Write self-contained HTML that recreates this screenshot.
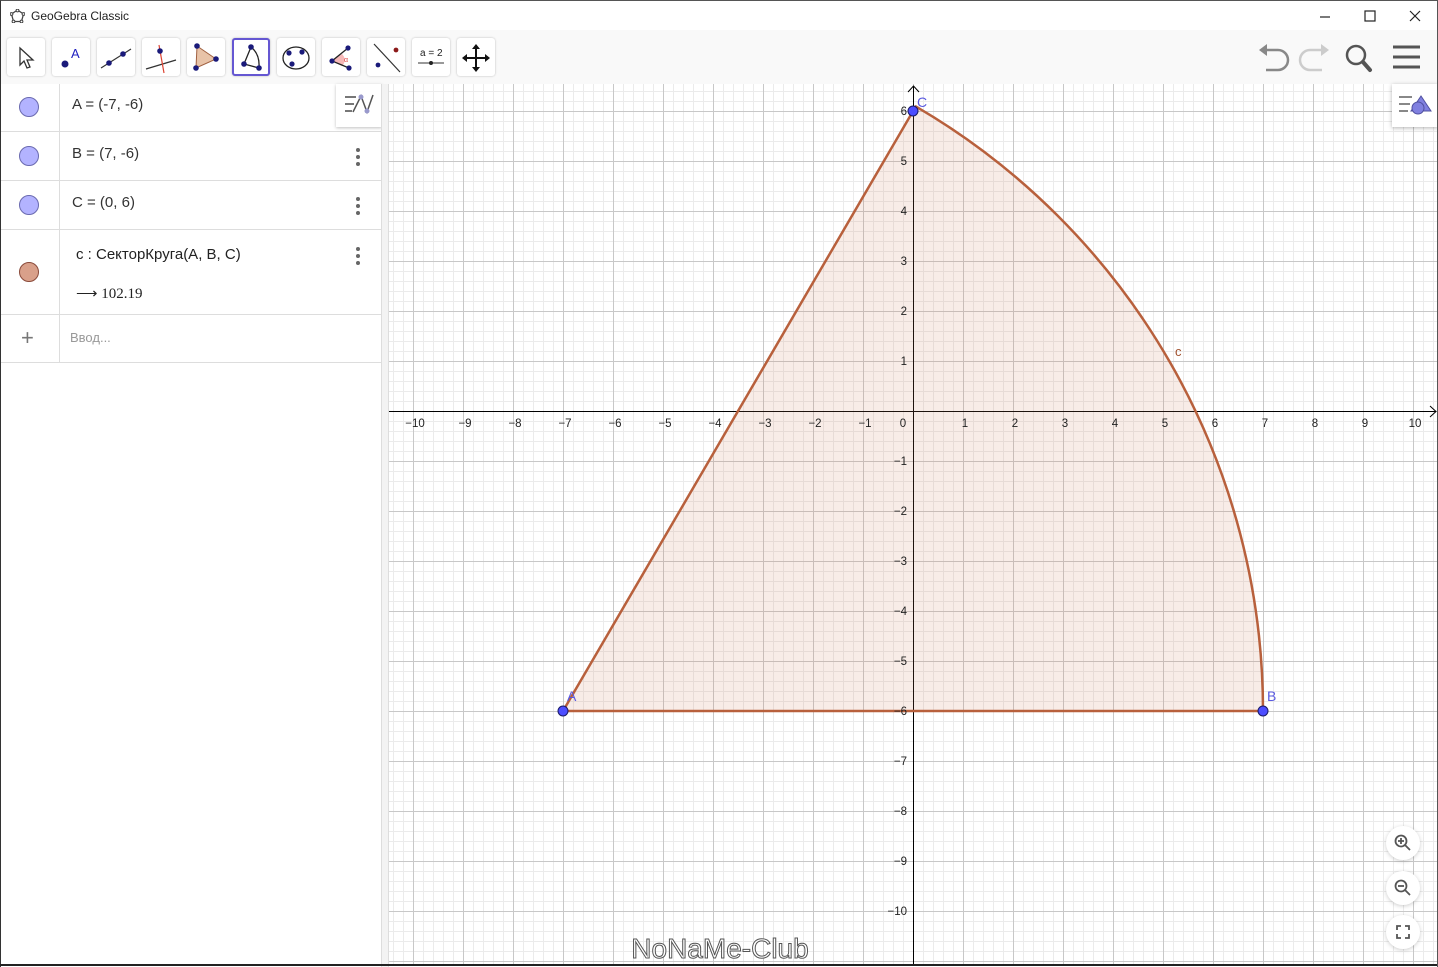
<!DOCTYPE html>
<html><head><meta charset="utf-8"><style>
*{margin:0;padding:0;box-sizing:border-box}
body{width:1438px;height:967px;overflow:hidden;background:#fff;font-family:"Liberation Sans","Noto Sans CJK SC",sans-serif;position:relative}
.title{position:absolute;left:0;top:0;width:1438px;height:30px;background:#fff;border-left:1px solid #333;border-top:1px solid #555}
.title span{position:absolute;left:30px;top:8px;font-size:12px;color:#222}
.tb{position:absolute;left:0;top:30px;width:1438px;height:54px;background:#f9f9f9;border-left:1px solid #333}
.btn{position:absolute;top:8px;width:38px;height:38px;background:#fff;border-radius:3px;box-shadow:0 0 2px rgba(0,0,0,.25)}
.btn.sel{border:2px solid #6557d2}
.alg{position:absolute;left:0;top:84px;width:381px;height:883px;background:#fff;border-left:1px solid #333}
.row{position:absolute;left:0;width:381px;border-bottom:1px solid #ddd}
.dot{position:absolute;left:18px;width:20px;height:20px;border-radius:50%;background:#b3b3ff;border:1px solid #6a6ab0}
.vl{position:absolute;left:58px;top:0;width:1px;height:279px;background:#ddd}
.txt{position:absolute;left:71px;font-size:15px;color:#333}
.menu{position:absolute;left:355px;width:4px;font-size:0}
.menu i{display:block;width:4px;height:4px;border-radius:50%;background:#666;margin-bottom:3px}
.sep{position:absolute;left:381px;top:84px;width:8px;height:883px;background:#f3f3f3;border-left:1px solid #ddd;border-right:1px solid #ddd}
</style></head><body>
<div class="title"><svg style="position:absolute;left:9px;top:8px" width="15" height="14"><polygon points="7.5,1 13.5,5 11.5,12.5 3.5,12.5 1.5,5" fill="none" stroke="#444" stroke-width="1.3"/><g fill="#fff" stroke="#444"><circle cx="7.5" cy="1.5" r="1.4"/><circle cx="13.5" cy="5" r="1.4"/><circle cx="11.5" cy="12.5" r="1.4"/><circle cx="3.5" cy="12.5" r="1.4"/><circle cx="1.5" cy="5" r="1.4"/></g></svg><span>GeoGebra Classic</span>
<svg style="position:absolute;left:1310px;top:6px" width="120" height="20" stroke="#222" stroke-width="1.2" fill="none"><line x1="9" y1="10" x2="19" y2="10"/><rect x="54" y="4" width="10" height="10"/><path d="M99 4 L109 14 M109 4 L99 14"/></svg></div>
<div class="tb">
<div class="btn" style="left:6px"><svg width="38" height="38"><path d="M13 10 L13 27 L17 23 L20 30 L23 29 L20 22 L26 22 Z" fill="#fff" stroke="#333" stroke-width="1.3"/></svg></div>
<div class="btn" style="left:51px"><svg width="38" height="38"><circle cx="13" cy="26" r="3.5" fill="#1a1a7a"/><text x="19" y="20" font-size="13" fill="#2020c0" font-family="Liberation Sans">A</text></svg></div>
<div class="btn" style="left:96px"><svg width="38" height="38"><line x1="4" y1="30" x2="34" y2="11" stroke="#333" stroke-width="1.2"/><circle cx="12" cy="25" r="2.8" fill="#1a1a7a"/><circle cx="26" cy="16" r="2.8" fill="#1a1a7a"/></svg></div>
<div class="btn" style="left:141px"><svg width="38" height="38"><line x1="4" y1="31" x2="34" y2="22" stroke="#333" stroke-width="1.2"/><line x1="17" y1="7" x2="22" y2="35" stroke="#d43" stroke-width="1.2"/><circle cx="18" cy="13" r="2.8" fill="#1a1a7a"/></svg></div>
<div class="btn" style="left:186px"><svg width="38" height="38"><polygon points="10,8 29,21 9,30" fill="#e8c3a8" stroke="#a06040"/><circle cx="10" cy="8" r="2.8" fill="#1a1a7a"/><circle cx="29" cy="21" r="2.8" fill="#1a1a7a"/><circle cx="9" cy="30" r="2.8" fill="#1a1a7a"/></svg></div>
<div class="btn sel" style="left:231px"><svg width="34" height="34"><path d="M10 24 L17 7 Q26 14 25 28 Z" fill="none" stroke="#222" stroke-width="1.3"/><circle cx="17" cy="7" r="2.8" fill="#1a1a7a"/><circle cx="10" cy="24" r="2.8" fill="#1a1a7a"/><circle cx="25" cy="28" r="2.8" fill="#1a1a7a"/></svg></div>
<div class="btn" style="left:276px"><svg width="38" height="38"><ellipse cx="19" cy="20" rx="13" ry="11" fill="none" stroke="#222" stroke-width="1.3"/><circle cx="12" cy="15" r="2.6" fill="#1a1a7a"/><circle cx="25" cy="14" r="2.6" fill="#1a1a7a"/><circle cx="15" cy="26" r="2.6" fill="#1a1a7a"/></svg></div>
<div class="btn" style="left:321px"><svg width="38" height="38"><path d="M10 23 L20 16 A8 8 0 0 1 20 28 Z" fill="#f6b8b8"/><path d="M26 10 L10 23 L27 30" fill="none" stroke="#222" stroke-width="1.3"/><circle cx="26" cy="10" r="2.6" fill="#1a1a7a"/><circle cx="10" cy="23" r="2.6" fill="#1a1a7a"/><circle cx="27" cy="30" r="2.6" fill="#1a1a7a"/><text x="22" y="24" font-size="7" fill="#d44">α</text></svg></div>
<div class="btn" style="left:366px"><svg width="38" height="38"><line x1="7" y1="6" x2="33" y2="34" stroke="#333" stroke-width="1.2"/><circle cx="29" cy="12" r="2.4" fill="#8b1a1a"/><circle cx="11" cy="27" r="2.4" fill="#1a1a7a"/></svg></div>
<div class="btn" style="left:411px"><svg width="38" height="38"><text x="8" y="18" font-size="10" fill="#222" font-family="Liberation Sans">a = 2</text><line x1="6" y1="25" x2="32" y2="25" stroke="#333"/><circle cx="19" cy="25" r="2" fill="#222"/></svg></div>
<div class="btn" style="left:456px"><svg width="38" height="38"><path d="M19 8 V32 M7 20 H31" stroke="#111" stroke-width="2"/><path d="M19 6 l-4 5 h8z M19 34 l-4 -5 h8z M5 20 l5 -4 v8z M33 20 l-5 -4 v8z" fill="#111"/></svg></div>
<svg style="position:absolute;left:1255px;top:10px" width="180" height="36"><g fill="none" stroke="#888" stroke-width="2.5"><path d="M8 10 H22 A7 7 0 0 1 22 30 H10"/></g><path d="M3 10 L11 4 V16 Z" fill="#888"/><g fill="none" stroke="#ccc" stroke-width="2.5"><path d="M68 10 H54 A7 7 0 0 0 54 30 H66"/></g><path d="M73 10 L65 4 V16 Z" fill="#ccc"/><circle cx="100" cy="15" r="9" fill="none" stroke="#555" stroke-width="2.5"/><line x1="107" y1="22" x2="114" y2="30" stroke="#555" stroke-width="4" stroke-linecap="round"/><g stroke="#555" stroke-width="3"><line x1="137" y1="7" x2="164" y2="7"/><line x1="137" y1="17" x2="164" y2="17"/><line x1="137" y1="27" x2="164" y2="27"/></g></svg>
</div>
<div class="alg">
<div class="vl"></div>
<div class="row" style="top:0;height:48px"><div class="dot" style="top:13px"></div><div class="txt" style="top:12px">A = (-7, -6)</div></div>
<div style="position:absolute;left:335px;top:0;width:46px;height:43px;background:#fff;box-shadow:0 1px 3px rgba(0,0,0,.25)"><svg width="46" height="43"><g stroke="#777" stroke-width="2"><line x1="9" y1="13" x2="20" y2="13"/><line x1="9" y1="20" x2="18" y2="20"/><line x1="9" y1="27" x2="16" y2="27"/></g><path d="M17 28 L25 12 L31 28 L37 11" fill="none" stroke="#555" stroke-width="1.5"/><circle cx="25" cy="13" r="2.5" fill="#99c"/><circle cx="31" cy="27" r="2.5" fill="#99c"/></svg></div>
<div class="row" style="top:48px;height:49px"><div class="dot" style="top:14px"></div><div class="txt" style="top:13px">B = (7, -6)</div><div class="menu" style="top:16px"><i></i><i></i><i></i></div></div>
<div class="row" style="top:97px;height:49px"><div class="dot" style="top:14px"></div><div class="txt" style="top:13px">C = (0, 6)</div><div class="menu" style="top:16px"><i></i><i></i><i></i></div></div>
<div class="row" style="top:146px;height:85px"><div class="dot" style="top:32px;background:#d9a08a;border-color:#8a4a3a"></div><div class="txt" style="top:16px;left:75px;color:#222">c : СекторКруга(A, B, C)</div><div class="txt" style="top:54px;left:75px;font-family:'Liberation Serif',serif;color:#222">⟶ 102.19</div><div class="menu" style="top:17px"><i></i><i></i><i></i></div></div>
<div class="row" style="top:231px;height:48px"><div style="position:absolute;left:20px;top:14px;font-size:22px;color:#777;line-height:18px">+</div><div class="txt" style="top:15px;left:69px;font-size:13px;color:#999">Ввод...</div></div>
</div>
<div class="sep"></div>
<svg style="position:absolute;left:0;top:0" width="1438" height="967">
<defs>
<pattern id="mi" x="3" y="1" width="10" height="10" patternUnits="userSpaceOnUse"><path d="M0.5 0 V10 M0 0.5 H10" stroke="#ebebeb" stroke-width="1" fill="none"/></pattern>
<pattern id="ma" x="13" y="11" width="50" height="50" patternUnits="userSpaceOnUse"><path d="M0.5 0 V50 M0 0.5 H50" stroke="#c8c8c8" stroke-width="1" fill="none"/></pattern>
<clipPath id="cl"><rect x="389" y="84" width="1049" height="880"/></clipPath>
</defs>
<g clip-path="url(#cl)">
<rect x="389" y="84" width="1049" height="880" fill="#fff"/>
<rect x="389" y="84" width="1049" height="880" fill="url(#mi)"/>
<rect x="389" y="84" width="1049" height="880" fill="url(#ma)"/>
<line x1="389" y1="411.5" x2="1436" y2="411.5" stroke="#000"/>
<line x1="913.5" y1="86" x2="913.5" y2="964" stroke="#000"/>
<path d="M908 92 L913.5 86 L919 92 M1430 406 L1436 411.5 L1430 417" fill="none" stroke="#000"/>
<path d="M563 711 L1263 711 A700 700 0 0 0 915.8 106.4 Z" fill="rgba(205,130,95,0.15)" stroke="#b8603c" stroke-width="2.5" stroke-linejoin="round"/>
<g font-size="11.5" fill="#222" font-family="Liberation Sans" text-anchor="middle">
<text x="415" y="427">−10</text><text x="465" y="427">−9</text><text x="515" y="427">−8</text><text x="565" y="427">−7</text><text x="615" y="427">−6</text><text x="665" y="427">−5</text><text x="715" y="427">−4</text><text x="765" y="427">−3</text><text x="815" y="427">−2</text><text x="865" y="427">−1</text><text x="903" y="427">0</text>
<text x="965" y="427">1</text><text x="1015" y="427">2</text><text x="1065" y="427">3</text><text x="1115" y="427">4</text><text x="1165" y="427">5</text><text x="1215" y="427">6</text><text x="1265" y="427">7</text><text x="1315" y="427">8</text><text x="1365" y="427">9</text><text x="1415" y="427">10</text>
</g>
<g font-size="11.5" fill="#222" font-family="Liberation Sans" text-anchor="end">
<text x="907" y="115">6</text><text x="907" y="165">5</text><text x="907" y="215">4</text><text x="907" y="265">3</text><text x="907" y="315">2</text><text x="907" y="365">1</text>
<text x="907" y="465">−1</text><text x="907" y="515">−2</text><text x="907" y="565">−3</text><text x="907" y="615">−4</text><text x="907" y="665">−5</text><text x="907" y="715">−6</text><text x="907" y="765">−7</text><text x="907" y="815">−8</text><text x="907" y="865">−9</text><text x="907" y="915">−10</text>
</g>
<g fill="#4d4dff" stroke="#1a1a66" stroke-width="1"><circle cx="563" cy="711" r="5"/><circle cx="1263" cy="711" r="5"/><circle cx="913" cy="111" r="5"/></g>
<g font-size="14" fill="#5a5ae0" font-family="Liberation Sans"><text x="567" y="701">A</text><text x="1267" y="701">B</text><text x="917" y="107">C</text></g>
<text x="1175" y="356" font-size="13" fill="#a0502e" font-family="Liberation Sans">c</text>
<text x="720" y="958" font-size="28" fill="#fff" stroke="#555" stroke-width="1" font-family="Liberation Sans" text-anchor="middle">NoNaMe-Club</text>
</g>
<rect x="1392" y="84" width="46" height="43" fill="#fff" style="filter:drop-shadow(0 1px 2px rgba(0,0,0,.3))"/>
<g stroke="#888" stroke-width="2"><line x1="1399" y1="97" x2="1412" y2="97"/><line x1="1399" y1="104" x2="1410" y2="104"/><line x1="1399" y1="111" x2="1408" y2="111"/></g>
<polygon points="1421,96 1431,111 1411,111" fill="#8080e0" stroke="#5050a0"/><circle cx="1418" cy="108" r="6" fill="#8080e0" stroke="#5050a0"/>
<g fill="#fff" style="filter:drop-shadow(0 1px 2px rgba(0,0,0,.2))"><circle cx="1403" cy="843" r="17"/><circle cx="1403" cy="888" r="17"/><circle cx="1403" cy="932" r="17"/></g>
<g fill="none" stroke="#555" stroke-width="1.8"><circle cx="1401" cy="841" r="5.5"/><line x1="1405" y1="845" x2="1410" y2="850"/><path d="M1398 841 h6 M1401 838 v6"/><circle cx="1401" cy="886" r="5.5"/><line x1="1405" y1="890" x2="1410" y2="895"/><path d="M1398 886 h6"/><path d="M1397 930 v-4 h4 M1405 926 h4 v4 M1409 934 v4 h-4 M1401 938 h-4 v-4"/></g>
<line x1="0" y1="965" x2="1438" y2="965" stroke="#222" stroke-width="2"/>
<line x1="1437.5" y1="0" x2="1437.5" y2="967" stroke="#555"/>
</svg>
</body></html>
